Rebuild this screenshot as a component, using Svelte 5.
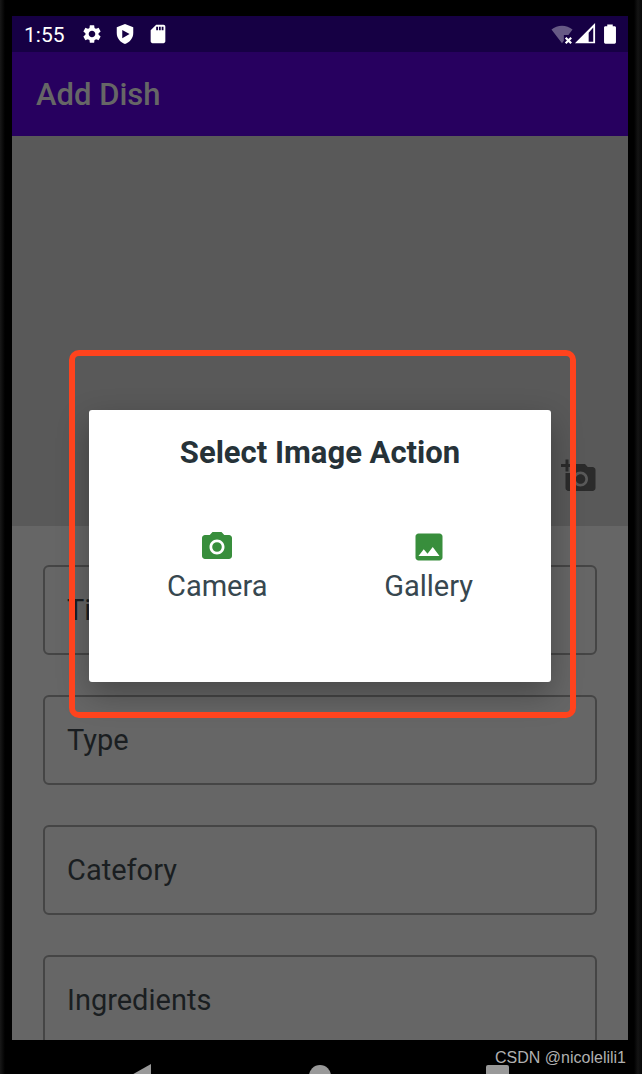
<script lang="ts">
  const fields = ["Title", "Type", "Catefory", "Ingredients"];

  const actions = [
    {
      name: "Camera",
      path: "M9 2 7.17 4H4c-1.1 0-2 .9-2 2v12c0 1.1.9 2 2 2h16c1.1 0 2-.9 2-2V6c0-1.1-.9-2-2-2h-3.17L15 2H9zm3 15c-2.76 0-5-2.24-5-5s2.24-5 5-5 5 2.24 5 5-2.24 5-5 5zm0-8.2a3.2 3.2 0 1 0 0 6.4 3.2 3.2 0 0 0 0-6.4z",
    },
    {
      name: "Gallery",
      path: "M21 19V5c0-1.1-.9-2-2-2H5c-1.1 0-2 .9-2 2v14c0 1.1.9 2 2 2h14c1.1 0 2-.9 2-2zM8.5 13.5l2.5 3.01L14.5 12l4.5 6H5l3.5-4.5z",
    },
  ];
</script>

<div class="device">
  <header class="status-bar">
    <span class="time">1:55</span>
    <svg class="status-icon" viewBox="0 0 24 24">
      <path
        d="M19.14 12.94c.04-.3.06-.61.06-.94 0-.32-.02-.64-.07-.94l2.03-1.58c.18-.14.23-.41.12-.61l-1.92-3.32c-.12-.22-.37-.29-.59-.22l-2.39.96c-.5-.38-1.03-.7-1.62-.94l-.36-2.54c-.04-.24-.24-.41-.48-.41h-3.84c-.24 0-.43.17-.47.41l-.36 2.54c-.59.24-1.13.57-1.62.94l-2.39-.96c-.22-.08-.47 0-.59.22L2.74 8.87c-.12.21-.08.47.12.61l2.03 1.58c-.05.3-.09.63-.09.94s.02.64.07.94l-2.03 1.58c-.18.14-.23.41-.12.61l1.92 3.32c.12.22.37.29.59.22l2.39-.96c.5.38 1.03.7 1.62.94l.36 2.54c.05.24.24.41.48.41h3.84c.24 0 .44-.17.47-.41l.36-2.54c.59-.24 1.13-.56 1.62-.94l2.39.96c.22.08.47 0 .59-.22l1.92-3.32c.12-.22.07-.47-.12-.61l-2.01-1.58zM12 15.6c-1.98 0-3.6-1.62-3.6-3.6s1.62-3.6 3.6-3.6 3.6 1.62 3.6 3.6-1.62 3.6-3.6 3.6z"
      />
    </svg>
    <svg class="status-icon" viewBox="0 0 24 24">
      <path
        fill-rule="evenodd"
        d="M12 1 3 4.5V11c0 5.6 3.8 10.2 9 12 5.2-1.8 9-6.4 9-12V4.5zM9 7.500 17 12 9 16.500z"
      />
    </svg>
    <svg class="status-icon" viewBox="0 0 24 24">
      <path
        d="M18 2h-8L4 8v12c0 1.1.9 2 2 2h12c1.1 0 2-.9 2-2V4c0-1.1-.9-2-2-2zm-6 6h-2V4h2v4zm3 0h-2V4h2v4zm3 0h-2V4h2v4z"
      />
    </svg>
    <div class="signals">
      <svg class="status-icon" viewBox="0 0 24 24">
        <path
          opacity=".35"
          d="M12 3C7.8 3 3.7 4.5.5 7.2L12 22l2-2.6V13h5l4.5-5.8C20.3 4.5 16.2 3 12 3z"
        />
        <path
          fill="none"
          stroke="#fff"
          stroke-width="2.4"
          d="m16 16 6 6m0-6-6 6"
        />
      </svg>
      <svg class="status-icon" viewBox="0 0 24 24">
        <path fill-rule="evenodd" d="M1 22 23 0v22zM16 10.500V20.500h5V5z" />
      </svg>
      <svg class="status-icon battery" viewBox="0 0 24 24">
        <path
          d="M17 3.500H15V1.500H9v2H7C6.200 3.500 5.500 4.200 5.500 5v16c0 .8.7 1.500 1.500 1.500h10c.8 0 1.500-.7 1.500-1.500V5c0-.8-.7-1.500-1.500-1.500z"
        />
      </svg>
    </div>
  </header>

  <div class="screen">
    <h1 class="toolbar">Add Dish</h1>
    <main>
      <div class="dish-image">
        <button class="add-photo" aria-label="Add photo">
          <svg viewBox="0 0 24 24">
            <path
              d="M3 4V1h2v3h3v2H5v3H3V6H0V4h3zm3 6V7h3V4h7l1.83 2H21c1.1 0 2 .9 2 2v12c0 1.1-.9 2-2 2H5c-1.1 0-2-.9-2-2V10h3zm7 9c2.76 0 5-2.24 5-5s-2.24-5-5-5-5 2.24-5 5 2.24 5 5 5zm-3.2-5c0 1.77 1.43 3.2 3.2 3.2s3.2-1.43 3.2-3.2-1.43-3.2-3.2-3.2-3.2 1.43-3.2 3.2z"
            />
          </svg>
        </button>
      </div>
      <form>
        {#each fields as field}
          <input type="text" placeholder={field} aria-label={field} />
        {/each}
      </form>
    </main>

    <div class="overlay">
      <div class="dialog" role="dialog" aria-labelledby="dialog-title">
        <h2 id="dialog-title">Select Image Action</h2>
        <div class="actions">
          {#each actions as action}
            <button class="action">
              <svg viewBox="0 0 24 24"><path d={action.path} /></svg>
              {action.name}
            </button>
          {/each}
        </div>
      </div>
    </div>
  </div>

  <footer class="nav-bar">
    <button aria-label="Back">
      <svg viewBox="0 0 24 24"><path d="M20-1v26L-3 12z" /></svg>
    </button>
    <button aria-label="Home">
      <svg viewBox="0 0 24 24"><circle cx="12" cy="11" r="11" /></svg>
    </button>
    <button aria-label="Overview">
      <svg viewBox="0 0 24 24"><rect x="1" width="23" height="23" rx="2" /></svg>
    </button>
    <span class="watermark">CSDN @nicolelili1</span>
  </footer>
</div>

<style>
  :global(body) {
    margin: 0;
    background: #000;
  }

  .device {
    display: flex;
    flex-direction: column;
    height: 100vh;
    padding: 16px 14px 0 12px;
    box-sizing: border-box;
    overflow: hidden;
    background: linear-gradient(
      to right,
      #181818,
      #000 5px,
      #000 calc(100% - 8px),
      #141414 calc(100% - 4px),
      #080808
    );
    font-family: Roboto, sans-serif;
  }

  button {
    padding: 0;
    border: 0;
    background: none;
    font: inherit;
    cursor: pointer;
  }

  svg {
    display: block;
    fill: currentColor;
  }

  .status-bar {
    display: flex;
    align-items: center;
    gap: 11px;
    flex: none;
    height: 36px;
    padding: 0 7px 0 12px;
    box-sizing: border-box;
    background: #160044;
    color: #fff;
  }

  .time {
    margin-right: 5px;
    padding-top: 2px;
    font-size: 21px;
  }

  .status-icon {
    width: 22px;
    height: 22px;
  }

  .signals {
    display: flex;
    gap: 1px;
    margin-left: auto;
  }

  .battery {
    margin-left: 2px;
  }

  .screen {
    position: relative;
    display: flex;
    flex-direction: column;
    flex: 1;
    min-height: 0;
  }

  .toolbar {
    flex: none;
    margin: 0;
    padding: 2px 24px 0;
    background: #27005f;
    color: #666;
    font-size: 31px;
    font-weight: 500;
    line-height: 82px;
  }

  main {
    flex: 1;
    min-height: 0;
    overflow: hidden;
    background: #666;
  }

  .dish-image {
    display: flex;
    align-items: flex-end;
    justify-content: flex-end;
    height: 390px;
    padding: 0 31px 32px;
    box-sizing: border-box;
    background: #595959;
  }

  .add-photo {
    color: #2b2b2b;
  }

  .add-photo svg,
  .action svg {
    width: 36px;
    height: 36px;
  }

  form {
    display: flex;
    flex-direction: column;
    gap: 40px;
    padding: 39px 31px;
  }

  input {
    width: 100%;
    height: 90px;
    padding: 0 22px;
    box-sizing: border-box;
    border: 2px solid #454545;
    border-radius: 6px;
    background: none;
    color: #1a1e21;
    font: 29px Roboto, sans-serif;
  }

  input::placeholder {
    color: #1a1e21;
    opacity: 1;
  }

  .overlay {
    position: absolute;
    inset: 0;
    display: flex;
    align-items: center;
    justify-content: center;
  }

  .dialog {
    position: relative;
    width: 75%;
    height: 272px;
    padding: 25px 78px;
    box-sizing: border-box;
    border-radius: 3px;
    background: #fff;
    box-shadow: 0 12px 32px rgba(0, 0, 0, 0.3);
  }

  /* highlight frame around the dialog */
  .dialog::after {
    content: "";
    position: absolute;
    inset: -60px -25px -36px -20px;
    border: 6px solid #ff431d;
    border-radius: 10px;
    pointer-events: none;
  }

  h2 {
    margin: 0 -40px;
    color: #263238;
    font-size: 31px;
    font-weight: 700;
    line-height: 36px;
    text-align: center;
  }

  .actions {
    display: flex;
    justify-content: space-between;
    margin-top: 58px;
  }

  .action {
    display: flex;
    flex-direction: column;
    align-items: center;
    gap: 4px;
    color: #37474f;
    font-size: 29px;
    line-height: 34px;
  }

  .action svg {
    color: #388e3c;
  }

  .nav-bar {
    position: relative;
    display: flex;
    justify-content: space-around;
    align-items: flex-start;
    flex: none;
    height: 34px;
    padding: 25px 42px 0;
    box-sizing: border-box;
    overflow: hidden;
    color: #999;
  }

  .nav-bar button {
    color: inherit;
  }

  .nav-bar svg {
    width: 24px;
    height: 24px;
    overflow: visible;
  }

  .watermark {
    position: absolute;
    top: 9px;
    right: 2px;
    color: #b0b0b0;
    font-family: "Liberation Sans", sans-serif;
    font-size: 16px;
    line-height: 18px;
  }
</style>
